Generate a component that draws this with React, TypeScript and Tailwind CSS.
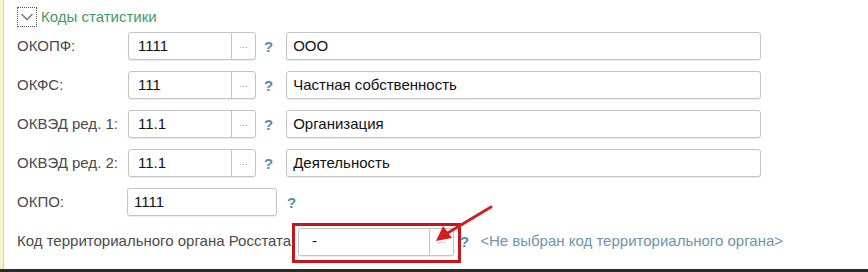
import React from 'react';

const font = { fontFamily: '"Liberation Sans", Arial, sans-serif' };

const Help: React.FC<{ className?: string }> = ({ className = '' }) => (
  <span className={`text-[15px] font-bold text-[#4f8fb3] leading-none ${className}`}>?</span>
);

const PickField: React.FC<{ value: string; width: string; pad?: string }> = ({ value, width, pad = 'pl-[9px]' }) => (
  <div className={`flex h-[28px] ${width} rounded-[3px] border border-[#c4c4c4] bg-white shadow-[0_1px_1px_rgba(0,0,0,0.08)]`}>
    <div className={`flex flex-1 items-center ${pad} text-[15px] text-[#111]`}>{value}</div>
    <div className="flex w-[24px] items-center justify-center border-l border-[#c4c4c4] pb-[4px] text-[10px] text-[#9a9a9a]">...</div>
  </div>
);

const TextBox: React.FC<{ value: string; width: string }> = ({ value, width }) => (
  <div className={`flex h-[28px] ${width} items-center rounded-[3px] border border-[#c4c4c4] bg-white pl-[6px] text-[15px] text-[#111] shadow-[0_1px_1px_rgba(0,0,0,0.08)]`}>
    {value}
  </div>
);

const rows = [
  { label: 'ОКОПФ:', code: '1111', name: 'ООО' },
  { label: 'ОКФС:', code: '111', name: 'Частная собственность' },
  { label: 'ОКВЭД ред. 1:', code: '11.1', name: 'Организация' },
  { label: 'ОКВЭД ред. 2:', code: '11.1', name: 'Деятельность' },
];

export default function App() {
  return (
    <div className="relative flex h-[272px] w-[868px] flex-col overflow-hidden bg-white" style={font}>
      <div className="flex flex-1">
        {/* left group strip */}
        <div className="w-[4px] bg-[#f7f3c6] border-r border-[#d9d5a9]" />

        <div className="flex flex-1 flex-col pl-[13px] pt-[7px]">
          {/* group header */}
          <div className="flex h-[20px] items-center gap-[4px]">
            <div className="flex h-[20px] w-[20px] items-center justify-center border border-dotted border-[#555]">
              <svg width="14" height="10" viewBox="0 0 14 10">
                <path d="M1.5 2 L7 7.5 L12.5 2" fill="none" stroke="#6f8796" strokeWidth="1.6" />
              </svg>
            </div>
            <span className="text-[15px] text-[#3f9b63]">Коды статистики</span>
          </div>

          <div className="mt-[5px] flex flex-col gap-[11px]">
            {rows.map((r) => (
              <div key={r.label} className="flex h-[28px] items-center">
                <div className="w-[111px] text-[15px] text-[#4a4a4a] whitespace-nowrap">{r.label}</div>
                <PickField value={r.code} width="w-[128px]" />
                <Help className="ml-[8px]" />
                <div className="ml-[13px]">
                  <TextBox value={r.name} width="w-[475px]" />
                </div>
              </div>
            ))}

            <div className="flex h-[28px] items-center">
              <div className="w-[110px] text-[15px] text-[#4a4a4a]">ОКПО:</div>
              <TextBox value="1111" width="w-[150px]" />
              <Help className="ml-[10px]" />
            </div>

            <div className="flex h-[29px] items-center">
              <div className="w-[281px] text-[15px] text-[#4a4a4a] whitespace-nowrap">Код территориального органа Росстата:</div>
              <div className="relative">
                <PickField value="-" width="w-[156px]" pad="pl-[13px]" />
                <div className="absolute -left-[6px] -top-[5px] h-[40px] w-[169px] border-[3px] border-[#c4161c]" />
              </div>
              <Help className="ml-[6px]" />
              <span className="ml-[11px] text-[15px] text-[#6d93ad] whitespace-nowrap">&lt;Не выбран код территориального органа&gt;</span>
            </div>
          </div>
        </div>
      </div>

      {/* bottom edge */}
      <div className="h-[3px] bg-[#2a2a2a]" />

      {/* annotation arrow */}
      <svg className="absolute left-0 top-0" width="868" height="272" viewBox="0 0 868 272">
        <line x1="491" y1="207" x2="446" y2="234" stroke="#d11f1f" strokeWidth="3" strokeLinecap="round" />
        <polygon points="436,241 443,226 452,238" fill="#d11f1f" />
      </svg>
    </div>
  );
}
